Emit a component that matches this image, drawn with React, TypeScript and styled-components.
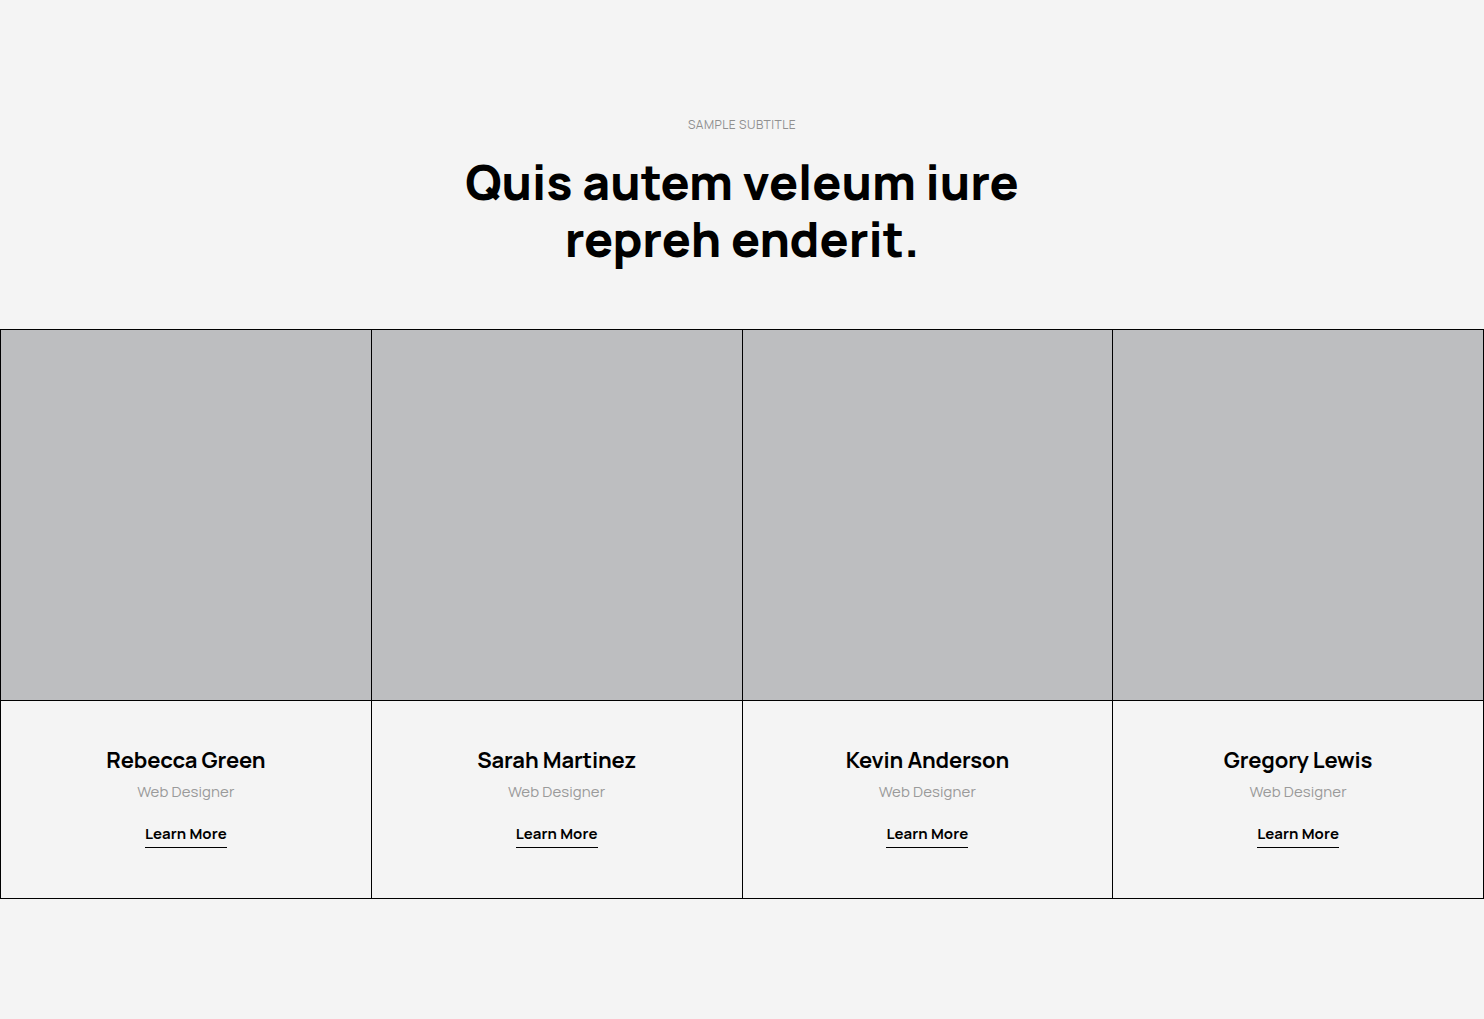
import React from "react";
import styled, { createGlobalStyle } from "styled-components";

const GlobalStyle = createGlobalStyle`
  html, body { margin: 0; padding: 0; background: #f4f4f4; }
  body { font-family: Manrope, Inter, "Noto Sans", sans-serif; color: #000; }
  * { box-sizing: border-box; }
`;

const Section = styled.section`
  padding: 116px 0 120px;
  background: #f4f4f4;
`;

const Header = styled.header`
  display: flex;
  flex-direction: column;
  align-items: center;
  text-align: center;
  margin-bottom: 62px;
`;

const Subtitle = styled.div`
  font-size: 12px;
  line-height: 18px;
  letter-spacing: 0.5px;
  color: #8f8f8f;
  text-transform: uppercase;
`;

const Title = styled.h2`
  margin: 19px 0 0;
  font-size: 48px;
  line-height: 57px;
  font-weight: 800;
  letter-spacing: 0;
  max-width: 640px;
`;

const Grid = styled.div`
  display: grid;
  grid-template-columns: repeat(4, 1fr);
  border-top: 1px solid #000;
  border-left: 1px solid #000;
`;

const Card = styled.article`
  display: flex;
  flex-direction: column;
  border-right: 1px solid #000;
  border-bottom: 1px solid #000;
`;

const Photo = styled.div`
  height: 371px;
  background: #bdbec0;
  border-bottom: 1px solid #000;
`;

const Body = styled.div`
  display: flex;
  flex-direction: column;
  align-items: center;
  padding: 46px 20px 50px;
`;

const Name = styled.h3`
  margin: 0;
  font-size: 22px;
  line-height: 26px;
  font-weight: 700;
  letter-spacing: -0.15px;
`;

const Role = styled.div`
  margin-top: 8px;
  font-size: 15px;
  line-height: 22px;
  color: #9a9a9a;
  letter-spacing: 0.1px;
`;

const More = styled.a`
  margin-top: 21px;
  font-size: 15px;
  line-height: 20px;
  font-weight: 700;
  color: #000;
  text-decoration: none;
  padding-bottom: 3px;
  border-bottom: 1px solid #000;
  letter-spacing: 0.1px;
  cursor: pointer;
`;

const people = ["Rebecca Green", "Sarah Martinez", "Kevin Anderson", "Gregory Lewis"];

export default function App() {
  return (
    <>
      <GlobalStyle />
      <Section>
        <Header>
          <Subtitle>Sample Subtitle</Subtitle>
          <Title>Quis autem veleum iure repreh enderit.</Title>
        </Header>
        <Grid>
          {people.map((p) => (
            <Card key={p}>
              <Photo />
              <Body>
                <Name>{p}</Name>
                <Role>Web Designer</Role>
                <More href="#">Learn More</More>
              </Body>
            </Card>
          ))}
        </Grid>
      </Section>
    </>
  );
}
